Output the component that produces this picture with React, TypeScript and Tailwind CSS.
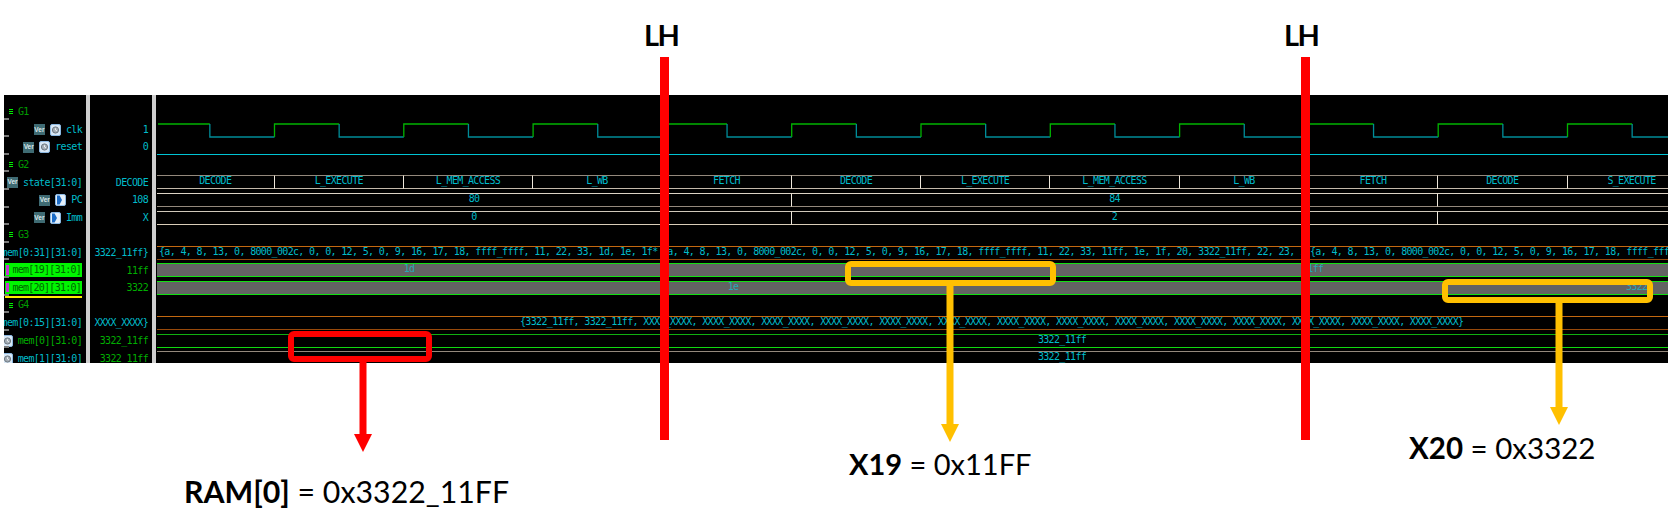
import type { ReactNode } from 'react';

const TEAL = 'text-[#00bccb]';
const GREEN = 'text-[#00ae00]';

function VerIcon() {
  return (
    <span className="flex h-[11px] w-[11px] shrink-0 items-center justify-center bg-[#3f6b73] font-['Liberation_Sans',sans-serif] text-[6.5px] font-bold leading-none tracking-normal text-[#dce8ea]">
      Ver
    </span>
  );
}

function ClockIcon() {
  return (
    <svg width="11" height="12" viewBox="0 0 11 12" className="shrink-0">
      <rect x="0.5" y="0.5" width="10" height="11" rx="1.5" fill="#d9e8f6" stroke="#8db9e2" />
      <circle cx="5.5" cy="6" r="3.1" fill="#a4adb5" stroke="#6d7780" strokeWidth="1" />
      <path d="M5.5 4.2V6L7 6.9" fill="none" stroke="#f2f5f7" strokeWidth="0.9" />
    </svg>
  );
}

function PortIcon() {
  return (
    <svg width="11" height="12" viewBox="0 0 11 12" className="shrink-0">
      <rect x="0.5" y="0.5" width="10" height="11" rx="1.5" fill="#e4eff9" stroke="#8db9e2" />
      <path d="M2 1.5H4.6L7 6L4.6 10.5H2Z" fill="#1c6cc6" />
    </svg>
  );
}

function NameRow({ children, icons, color = TEAL }: { children?: ReactNode; icons?: ReactNode; color?: string }) {
  return (
    <div className={`relative flex h-[17.6px] items-center justify-end gap-[5px] whitespace-nowrap pr-[4px] pt-[1px] ${color}`}>
      {icons}
      <span className="shrink-0">{children}</span>
      <Tick />
    </div>
  );
}

function Tick() {
  return <span className="absolute bottom-[1px] left-0 h-[2px] w-[5px] bg-[#7a7a7a]" />;
}

function GroupRow({ name }: { name: string }) {
  return (
    <div className="relative flex h-[17.6px] items-center gap-[5px] pl-[5px] text-[#009c00]">
      <span className="flex w-[4px] flex-col gap-[1px]">
        <span className="h-[1px] bg-[#00f000]" />
        <span className="h-[1px] bg-[#00f000]" />
        <span className="h-[1px] bg-[#00f000]" />
      </span>
      <span>{name}</span>
      <Tick />
    </div>
  );
}

function HighlightRow({ children, yellow }: { children: ReactNode; yellow?: boolean }) {
  return (
    <div className="relative h-[17.6px]">
      <div className="ml-[1px] mr-[4px] flex h-[13.5px] translate-y-[2px] items-center justify-end bg-[#00f500] pr-[1px] tracking-[-0.75px] text-[#006400]">
        <span className="absolute bottom-[2px] left-[1px] top-[2px] w-[3px] bg-[#c832d8]" />
        {children}
      </div>
      {yellow && <span className="absolute -bottom-[1.5px] left-[1px] right-[4px] h-[2px] bg-[#ffee00]" />}
      <Tick />
    </div>
  );
}

function ValueRow({ children, color = TEAL }: { children?: ReactNode; color?: string }) {
  return <div className={`flex h-[17.6px] items-center justify-end whitespace-nowrap pr-[4px] pt-[1px] ${color}`}>{children}</div>;
}

function Seg({ className, children }: { className: string; children?: ReactNode }) {
  return (
    <div className={`box-border flex h-[14px] shrink-0 items-center overflow-x-clip whitespace-nowrap border-y pb-[2px] ${className}`}>
      {children}
    </div>
  );
}

function Row({ children }: { children?: ReactNode }) {
  return <div className="flex h-[17.6px] pt-[2px]">{children}</div>;
}

const STATE = 'justify-center border-t-[#94897c] border-b-[#c4b9aa] border-l-[#efe8dc]';
const PC = 'justify-center border-t-[#dcd3c5] border-b-[#94897c] border-l-[#efe8dc]';
const IMM = 'justify-center border-t-[#d0c8ba] border-b-[#d8ccb8] border-l-[#efe8dc]';
const MEM = 'border-t-[#c46810] border-b-[#98490a]';
const GREY = 'border-y-[#12e012] bg-[#636363] text-[#2aa6b4]';

const MEM_ROW_1 = '{a, 4, 8, 13, 0, 8000_002c, 0, 0, 12, 5, 0, 9, 16, 17, 18, ffff_ffff, 11, 22, 33, 1d, 1e, 1f*';
const MEM_ROW_2 = '{a, 4, 8, 13, 0, 8000_002c, 0, 0, 12, 5, 0, 9, 16, 17, 18, ffff_ffff, 11, 22, 33, 11ff, 1e, 1f, 20, 3322_11ff, 22, 23, 1f*';
const MEM_ROW_3 = '{a, 4, 8, 13, 0, 8000_002c, 0, 0, 12, 5, 0, 9, 16, 17, 18, ffff_ffff, 11, 22, 33, 1d, 1e, 1f*';
const MEM_ROW_4 =
  '{3322_11ff, 3322_11ff, XXXX_XXXX, XXXX_XXXX, XXXX_XXXX, XXXX_XXXX, XXXX_XXXX, XXXX_XXXX, XXXX_XXXX, XXXX_XXXX, XXXX_XXXX, XXXX_XXXX, XXXX_XXXX, XXXX_XXXX, XXXX_XXXX, XXXX_XXXX}';

// rising edges of clk, x relative to the wave panel
const RISES = [117.5, 246.8, 376.1, 505.4, 634.7, 764, 893.3, 1022.6, 1151.9, 1281.2, 1410.5];
const HALF = 64.65;

function ClockWave() {
  return (
    <svg width="1512" height="18" className="block">
      <path d={`M1 3H${RISES[0] - HALF}`} fill="none" stroke="#00b400" strokeWidth="1.3" />
      {RISES.map((x) => (
        <g key={x} fill="none" strokeWidth="1.3">
          <path d={`M${x - HALF} 3V16H${x}`} stroke="#008c98" />
          <path d={`M${x} 16V3H${x + HALF}`} stroke="#00b400" />
        </g>
      ))}
      <path d={`M${RISES[10] + HALF} 3V16H1512`} fill="none" stroke="#008c98" strokeWidth="1.3" />
    </svg>
  );
}

function Waves() {
  return (
    <div className="ml-[1px] flex-1 overflow-hidden pt-[8px] text-[#00bccb]">
      <div className="h-[17.6px]" />
      <div className="h-[17.6px]">
        <ClockWave />
      </div>
      <div className="h-[17.6px] pt-[16px]">
        <div className="h-[1px] bg-[#00c4d4]" />
      </div>
      <div className="h-[17.6px]" />

      <Row>
        <Seg className={`w-[116.5px] ${STATE}`}>DECODE</Seg>
        <Seg className={`w-[129.5px] border-l ${STATE}`}>L_EXECUTE</Seg>
        <Seg className={`w-[129px] border-l ${STATE}`}>L_MEM_ACCESS</Seg>
        <Seg className={`w-[129px] border-l ${STATE}`}>L_WB</Seg>
        <Seg className={`w-[130px] border-l ${STATE}`}>FETCH</Seg>
        <Seg className={`w-[129px] border-l ${STATE}`}>DECODE</Seg>
        <Seg className={`w-[129px] border-l ${STATE}`}>L_EXECUTE</Seg>
        <Seg className={`w-[130px] border-l ${STATE}`}>L_MEM_ACCESS</Seg>
        <Seg className={`w-[129px] border-l ${STATE}`}>L_WB</Seg>
        <Seg className={`w-[129px] border-l ${STATE}`}>FETCH</Seg>
        <Seg className={`w-[129.5px] border-l ${STATE}`}>DECODE</Seg>
        <Seg className={`w-[129px] border-l ${STATE}`}>S_EXECUTE</Seg>
      </Row>
      <Row>
        <Seg className={`w-[634px] ${PC}`}>80</Seg>
        <Seg className={`w-[646px] border-l ${PC}`}>84</Seg>
        <Seg className={`w-[232px] border-l ${PC}`} />
      </Row>
      <Row>
        <Seg className={`w-[634px] ${IMM}`}>0</Seg>
        <Seg className={`w-[646px] border-l ${IMM}`}>2</Seg>
        <Seg className={`w-[232px] border-l ${IMM}`} />
      </Row>

      <div className="h-[17.6px]" />

      <Row>
        <Seg className={`w-[504px] pl-[2px] ${MEM}`}>{MEM_ROW_1}</Seg>
        <Seg className={`w-[648px] pl-[1px] ${MEM}`}>{MEM_ROW_2}</Seg>
        <Seg className={`w-[360px] pl-[1px] ${MEM}`}>{MEM_ROW_3}</Seg>
      </Row>
      <Row>
        <Seg className={`w-[504px] justify-center ${GREY}`}>1d</Seg>
        <Seg className={`w-[1008px] pl-[641px] ${GREY}`}>11ff</Seg>
      </Row>
      <Row>
        <Seg className={`w-[1152px] justify-center ${GREY}`}>1e</Seg>
        <Seg className={`w-[360px] pl-[317px] ${GREY}`}>3322</Seg>
      </Row>

      <div className="h-[17.6px]" />

      <Row>
        <Seg className={`w-[1512px] pl-[363px] ${MEM}`}>{MEM_ROW_4}</Seg>
      </Row>
      <Row>
        <Seg className="w-[1512px] justify-center border-t-[#10b010] border-b-[#10d810] pl-[298px]">3322_11ff</Seg>
      </Row>
      <Row>
        <Seg className="w-[1512px] justify-center border-t-[#94897c] border-b-transparent pl-[298px]">3322_11ff</Seg>
      </Row>
    </div>
  );
}

function Box({ className }: { className: string }) {
  return <div className={`absolute rounded-[6px] border-[6px] ${className}`} />;
}

function Arrow({ className, height, color }: { className: string; height: number; color: string }) {
  return (
    <svg width="18" height={height} viewBox={`0 0 18 ${height}`} className={`absolute ${className}`}>
      <rect x="5.5" y="0" width="7" height={height - 17} fill={color} />
      <polygon points={`0,${height - 18} 18,${height - 18} 9,${height}`} fill={color} />
    </svg>
  );
}

function Note({ className, bold, value }: { className: string; bold: string; value: string }) {
  return (
    <div className={`absolute whitespace-nowrap font-['Lato',sans-serif] leading-none text-black ${className}`}>
      <b className="font-bold">{bold}</b> = {value}
    </div>
  );
}

export default function App() {
  return (
    <div className="relative h-[511px] w-[1668px] overflow-hidden bg-white pl-[4px] pt-[95px]">
      <div className="flex h-[268px] font-['DejaVu_Sans_Mono',monospace] text-[10px] leading-[14px] tracking-[-0.66px]">
        {/* Signal names */}
        <div className="w-[82px] shrink-0 overflow-hidden bg-black pt-[8px]">
          <GroupRow name="G1" />
          <NameRow icons={<><VerIcon /><ClockIcon /></>}>clk</NameRow>
          <NameRow icons={<><VerIcon /><ClockIcon /></>}>reset</NameRow>
          <GroupRow name="G2" />
          <NameRow icons={<VerIcon />}>state[31:0]</NameRow>
          <NameRow icons={<><VerIcon /><PortIcon /></>}>PC</NameRow>
          <NameRow icons={<><VerIcon /><PortIcon /></>}>Imm</NameRow>
          <GroupRow name="G3" />
          <NameRow>mem[0:31][31:0]</NameRow>
          <HighlightRow>mem[19][31:0]</HighlightRow>
          <HighlightRow yellow>mem[20][31:0]</HighlightRow>
          <GroupRow name="G4" />
          <NameRow>mem[0:15][31:0]</NameRow>
          <NameRow color={GREEN} icons={<ClockIcon />}>mem[0][31:0]</NameRow>
          <NameRow icons={<ClockIcon />}>mem[1][31:0]</NameRow>
        </div>

        <div className="w-[4px] shrink-0 bg-[#cfcfcf]" />

        {/* Signal values */}
        <div className="w-[62px] shrink-0 overflow-hidden bg-black pt-[8px]">
          <ValueRow />
          <ValueRow>1</ValueRow>
          <ValueRow>0</ValueRow>
          <ValueRow />
          <ValueRow>DECODE</ValueRow>
          <ValueRow>108</ValueRow>
          <ValueRow>X</ValueRow>
          <ValueRow />
          <ValueRow>3322_11ff{'}'}</ValueRow>
          <ValueRow color={GREEN}>11ff</ValueRow>
          <ValueRow color={GREEN}>3322</ValueRow>
          <ValueRow />
          <ValueRow>XXXX_XXXX{'}'}</ValueRow>
          <ValueRow color={GREEN}>3322_11ff</ValueRow>
          <ValueRow color={GREEN}>3322_11ff</ValueRow>
        </div>

        <div className="w-[4px] shrink-0 bg-[#cfcfcf]" />

        {/* Wave area */}
        <div className="flex min-w-0 flex-1 bg-black">
          <Waves />
        </div>
      </div>

      {/* Annotations over the capture */}
      <div className="absolute left-[644px] top-[18px] font-['Lato',sans-serif] text-[29px] font-bold leading-[34px] tracking-[-1.5px] text-black">LH</div>
      <div className="absolute left-[1284px] top-[18px] font-['Lato',sans-serif] text-[29px] font-bold leading-[34px] tracking-[-1.5px] text-black">LH</div>
      <div className="absolute left-[660px] top-[57px] h-[383px] w-[9px] bg-[#ff0000]" />
      <div className="absolute left-[1301px] top-[57px] h-[383px] w-[9px] bg-[#ff0000]" />

      <Box className="left-[288px] top-[331px] h-[31px] w-[144px] border-[#ff0000]" />
      <Arrow className="left-[354px] top-[361px]" height={91} color="#ff0000" />
      <Box className="left-[845px] top-[261px] h-[25px] w-[211px] border-[#ffc000]" />
      <Arrow className="left-[941px] top-[285px]" height={157} color="#ffc000" />
      <Box className="left-[1442px] top-[279px] h-[24px] w-[211px] border-[#ffc000]" />
      <Arrow className="left-[1550px] top-[302px]" height={123} color="#ffc000" />

      <Note className="left-[184px] top-[476px] text-[30.3px]" bold="RAM[0]" value="0x3322_11FF" />
      <Note className="left-[849px] top-[449px] text-[29px]" bold="X19" value="0x11FF" />
      <Note className="left-[1409px] top-[433px] text-[29.5px]" bold="X20" value="0x3322" />
    </div>
  );
}
